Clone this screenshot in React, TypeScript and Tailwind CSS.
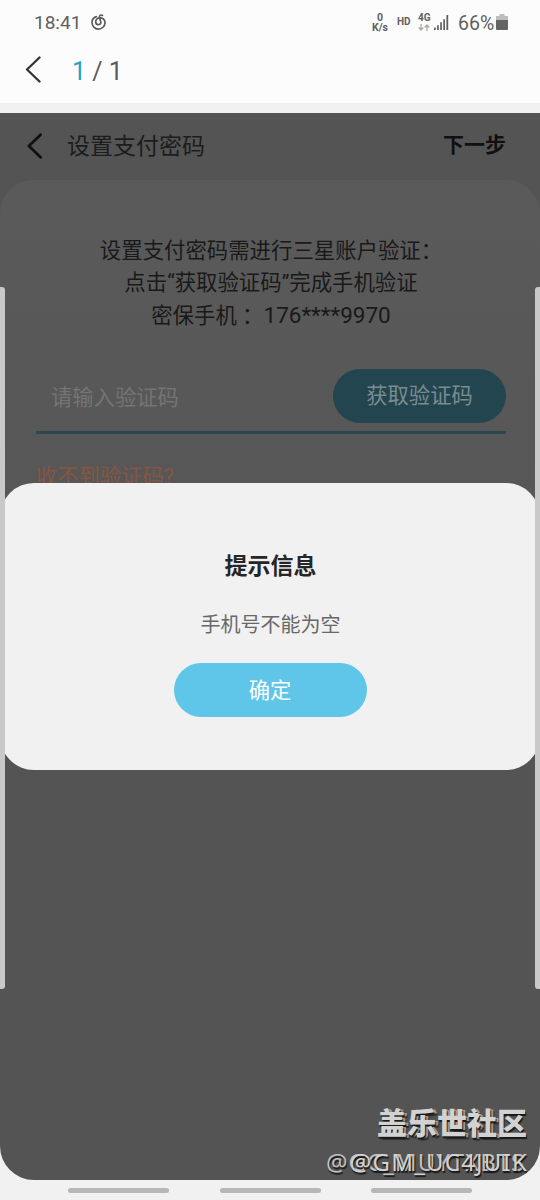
import type { ReactNode } from "react";

const cjk = "font-['Roboto','Noto_Sans_CJK_SC',sans-serif]";

function Chevron({ className }: { className: string }) {
  return (
    <svg className={className} viewBox="0 0 16 27" fill="none" stroke="currentColor" strokeLinecap="round" strokeLinejoin="round">
      <path d="M14.5 1.5 2 13.5l12.5 12" />
    </svg>
  );
}

function MusicIcon() {
  return (
    <svg className="mt-[14px] ml-[10px] h-4 w-4" viewBox="0 0 16 16" fill="none" stroke="#5b5b5b" strokeWidth="1.7" strokeLinecap="round">
      <path d="M5.3 2.600C2.700 3.500 1 5.700 1 8.400a6.500 6.500 0 0 0 13 .3c0-2.700-1.800-4.700-4.600-4.900C6.600 3.600 4.700 5.300 4.700 7.700c0 1.700 1.100 3 2.700 3s2.700-1.300 2.300-2.900L8.500 3.300C8.200 1.700 9.600.5 11.500 1.400" />
    </svg>
  );
}

function StatusBar() {
  return (
    <div className="flex h-[45px] items-start text-[#606060]">
      <div className="mt-[11px] ml-[34px] w-[47px] text-[19px] leading-6 whitespace-nowrap">18:41</div>
      <MusicIcon />
      <div className="mt-[13px] ml-auto w-[18px] text-center text-[10.500px] leading-[10px] font-bold">
        <div>0</div>
        <div>K/s</div>
      </div>
      <div className="mt-[16px] ml-[8px] w-[16px] text-[10px] leading-3 font-bold">HD</div>
      <div className="mt-[13px] ml-[5px] w-[14px]">
        <div className="text-[10px] leading-[10px] font-bold">4G</div>
        <svg className="mt-px h-[7px] w-[12px]" viewBox="0 0 12 7" fill="none" stroke="#aaa" strokeWidth="1.300">
          <path d="M3 0v6M.7 3.500 3 6l2.300-2.500M9 7V1M6.700 3.500 9 1l2.300 2.500" />
        </svg>
      </div>
      <svg className="mt-[15px] ml-[2px] h-[15px] w-[15px]" viewBox="0 0 15 15" fill="#5f5f5f">
        <path d="M0 12.500h1.700V15H0zM3.100 10.200h1.700V15H3.100zM6.200 7.200h1.700V15H6.200zM9.300 4.200h1.700V15H9.300zM12.400 0h1.800v15h-1.800z" />
      </svg>
      <div className="mt-[12px] ml-[9px] w-[37px] text-[19.500px] leading-6 whitespace-nowrap">66%</div>
      <svg className="mt-[14px] mr-[32px] ml-px h-4 w-[12px]" viewBox="0 0 12 16">
        <path d="M3.500 0h5v2H12v5H0V2h3.500z" fill="#bdbdbd" />
        <path d="M0 6h12v9q0 1-1 1H1q-1 0-1-1z" fill="#646464" />
      </svg>
    </div>
  );
}

function PillButton({ className, children }: { className: string; children: ReactNode }) {
  return <button className={`flex h-[54px] items-center justify-center rounded-full ${className}`}>{children}</button>;
}

function PaymentPage() {
  return (
    <div className="flex h-full flex-col">
      <header className="flex h-[67px] shrink-0 items-start text-[#1c1c1c]">
        <Chevron className="mt-5 ml-[27px] h-[26px] w-[15px] stroke-[3] text-[#111]" />
        <h1 className="mt-[17px] ml-[25px] text-[23px] leading-[34px]">设置支付密码</h1>
        <span className="mt-[15px] mr-[34px] ml-auto text-[21px] leading-[34px] font-bold text-[#101010]">下一步</span>
      </header>
      <section className="h-[400px] rounded-t-[34px] bg-linear-to-b from-[#5a5a5a] to-[#565656] pt-[55px] pr-[34px] pl-[36px]">
        <div className="flex h-[99px] flex-col items-center text-[21.400px] leading-[32px] whitespace-nowrap text-[#191919]">
          <p>设置支付密码需进行三星账户验证：</p>
          <p>点击“获取验证码”完成手机验证</p>
          <p>
            密保手机 ：<span className="text-[22.500px]">176****9970</span>
          </p>
        </div>
        <div className="mt-[35px] flex h-[65px] items-start border-b-[3px] border-[#2c4750]">
          <span className="mt-[14px] ml-[15px] text-[21.300px] leading-[30px] text-[#747474]">请输入验证码</span>
          <PillButton className="ml-auto w-[173px] bg-[#23454f] text-[21.300px] text-[#7b8b90]">获取验证码</PillButton>
        </div>
        <p className="mt-[26px] text-[21.300px] leading-[34px] text-[#865543]">收不到验证码?</p>
      </section>
    </div>
  );
}

function Dialog() {
  return (
    <div className="absolute inset-x-0 top-[370px] flex h-[287px] flex-col items-center rounded-[34px] bg-[#f1f1f1] pt-[67px]">
      <h2 className="pl-px text-[23px] leading-[34px] font-bold text-[#262626]">提示信息</h2>
      <p className="mt-[26px] pl-px text-[20px] leading-[30px] text-[#686868]">手机号不能为空</p>
      <PillButton className="mt-[23px] w-[193px] bg-[#5fc6e9] pt-px text-[21.300px] text-white">确定</PillButton>
    </div>
  );
}

function Watermark() {
  return (
    <div className="absolute right-[13px] bottom-0 flex flex-col items-end text-[#d2d2d2] [text-shadow:1px_2px_1px_#181818]">
      <div className="relative text-[30px] leading-[40px] font-black">
        <span className="absolute top-px left-[3px] opacity-60" aria-hidden="true">
          盖乐世社
        </span>
        <span className="relative">盖乐世社区</span>
      </div>
      <div className="relative h-[36px] w-[201px] font-['Noto_Sans',sans-serif] text-[24px] leading-[36px] whitespace-nowrap">
        <span className="absolute left-0 tracking-[1px] text-[#c0c0c0]">@GC_MUYTXBTS</span>
        <span className="absolute -right-px tracking-[1.200px]">@GM_UC4JUIK</span>
      </div>
    </div>
  );
}

export default function App() {
  return (
    <main className={`flex h-[1200px] w-[540px] flex-col overflow-hidden bg-[#f1f1f1] ${cjk}`}>
      <div className="h-[103px] bg-[#fcfcfc]">
        <StatusBar />
        <div className="flex items-start text-[#5c5c5c]">
          <Chevron className="mt-[11px] ml-[25px] h-[27px] w-[16px] stroke-[2.300] text-[#333]" />
          <p className="mt-[11px] ml-[31px] text-[25px] leading-[31px]">
            <span className="text-[#22a3c9]">1</span> / 1
          </p>
        </div>
      </div>
      <div className="relative mt-[10px] h-[1067px] overflow-hidden rounded-b-[34px] bg-[#545454]">
        <PaymentPage />
        <Dialog />
        <div className="absolute top-[174px] left-0 h-[702px] w-[5px] rounded-r-[3px] bg-[#c9c9c9]" />
        <div className="absolute top-[174px] right-0 h-[702px] w-[5px] rounded-l-[3px] bg-[#c9c9c9]" />
        <Watermark />
      </div>
      <div className="mt-[8px] flex h-[5px] justify-between px-[68px]">
        <i className="w-[101px] rounded-full bg-[#b7b7b7]" />
        <i className="w-[101px] rounded-full bg-[#b7b7b7]" />
        <i className="w-[101px] rounded-full bg-[#b7b7b7]" />
      </div>
    </main>
  );
}
